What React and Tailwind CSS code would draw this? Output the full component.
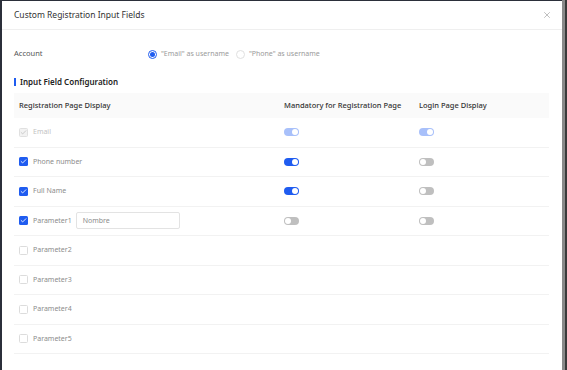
import { X, Check } from "lucide-react";

const rows = [
  { label: "Email", checked: true, disabled: true, mand: "dis", login: "dis" },
  { label: "Phone number", checked: true, mand: "on", login: "off" },
  { label: "Full Name", checked: true, mand: "on", login: "off" },
  { label: "Parameter1", checked: true, mand: "off", login: "off", input: true },
  { label: "Parameter2" },
  { label: "Parameter3" },
  { label: "Parameter4" },
  { label: "Parameter5" },
];

function Toggle({ state }) {
  const bg = state === "on" ? "bg-[#1f5cf0]" : state === "dis" ? "bg-[#a8c0fa]" : "bg-[#bfbfbf]";
  const right = state === "on" || state === "dis";
  return (
    <div className={`w-[15px] h-[8px] rounded-full ${bg} flex items-center px-[1px] ${right ? "justify-end" : "justify-start"}`}>
      <div className="w-[6px] h-[6px] rounded-full bg-white" />
    </div>
  );
}

function Box({ checked, disabled }) {
  if (!checked) return <div className="w-[9px] h-[9px] rounded-[1.5px] border border-[#dcdcdc] bg-white" />;
  return (
    <div className={`w-[9px] h-[9px] rounded-[1.5px] flex items-center justify-center ${disabled ? "bg-[#f2f2f2] border border-[#e0e0e0]" : "bg-[#1f5cf0]"}`}>
      <Check className={`w-[7px] h-[7px] ${disabled ? "text-[#c4c4c4]" : "text-white"}`} strokeWidth={3} />
    </div>
  );
}

export default function App() {
  return (
    <div className="w-[567px] h-[370px] bg-[#2b2f3a] flex overflow-hidden" style={{ fontFamily: '"Noto Sans", Inter, sans-serif' }}>
      <div className="w-[560px] ml-[2px] mt-[1px] bg-white flex flex-col">
        <div className="h-[29px] flex items-center justify-between pl-[12px] pr-[10px] border-b border-[#efefef]">
          <span className="text-[8.5px] text-[#333]">Custom Registration Input Fields</span>
          <X className="w-[10px] h-[10px] text-[#999]" strokeWidth={1.5} />
        </div>
        <div className="px-[12px]">
          <div className="flex items-center h-[16px] mt-[16px] text-[7.5px]">
            <span className="w-[134px] text-[#555]">Account</span>
            <div className="flex items-center gap-[4px]">
              <div className="w-[9px] h-[9px] rounded-full border border-[#1f5cf0] flex items-center justify-center">
                <div className="w-[5px] h-[5px] rounded-full bg-[#1f5cf0]" />
              </div>
              <span className="text-[#9a9a9a] text-[7px]">"Email" as username</span>
            </div>
            <div className="flex items-center gap-[4px] ml-[7px]">
              <div className="w-[9px] h-[9px] rounded-full border border-[#e0e0e0]" />
              <span className="text-[#9a9a9a] text-[7px]">"Phone" as username</span>
            </div>
          </div>
          <div className="flex items-center gap-[4px] mt-[14px] h-[12px]">
            <div className="w-[2px] h-[8px] bg-[#1f5cf0]" />
            <span className="text-[8px] font-semibold text-[#222]">Input Field Configuration</span>
          </div>
          <div className="mt-[5px] w-[535px] text-[7.5px]">
            <div className="h-[25px] bg-[#fafafa] flex items-center font-medium text-[#333]">
              <div className="w-[270px] pl-[5px]">Registration Page Display</div>
              <div className="w-[135px]">Mandatory for Registration Page</div>
              <div>Login Page Display</div>
            </div>
            {rows.map((r) => (
              <div key={r.label} className="h-[29.5px] flex items-center border-b border-[#f2f2f2]">
                <div className="w-[270px] pl-[5px] flex items-center">
                  <Box checked={r.checked} disabled={r.disabled} />
                  <span className={`ml-[5px] text-[7px] ${r.disabled ? "text-[#c2c2c2]" : "text-[#8c8c8c]"}`}>{r.label}</span>
                  {r.input && (
                    <div className="ml-[4px] w-[104px] h-[17px] border border-[#e3e3e3] rounded-[2px] flex items-center px-[6px] text-[7px] text-[#8c8c8c]">Nombre</div>
                  )}
                </div>
                <div className="w-[135px]">{r.mand && <Toggle state={r.mand} />}</div>
                <div>{r.login && <Toggle state={r.login} />}</div>
              </div>
            ))}
          </div>
        </div>
      </div>
      <div className="w-[3px] bg-[#8a8a8a]" />
      <div className="flex-1 bg-[#3a3a3a]" />
    </div>
  );
}
